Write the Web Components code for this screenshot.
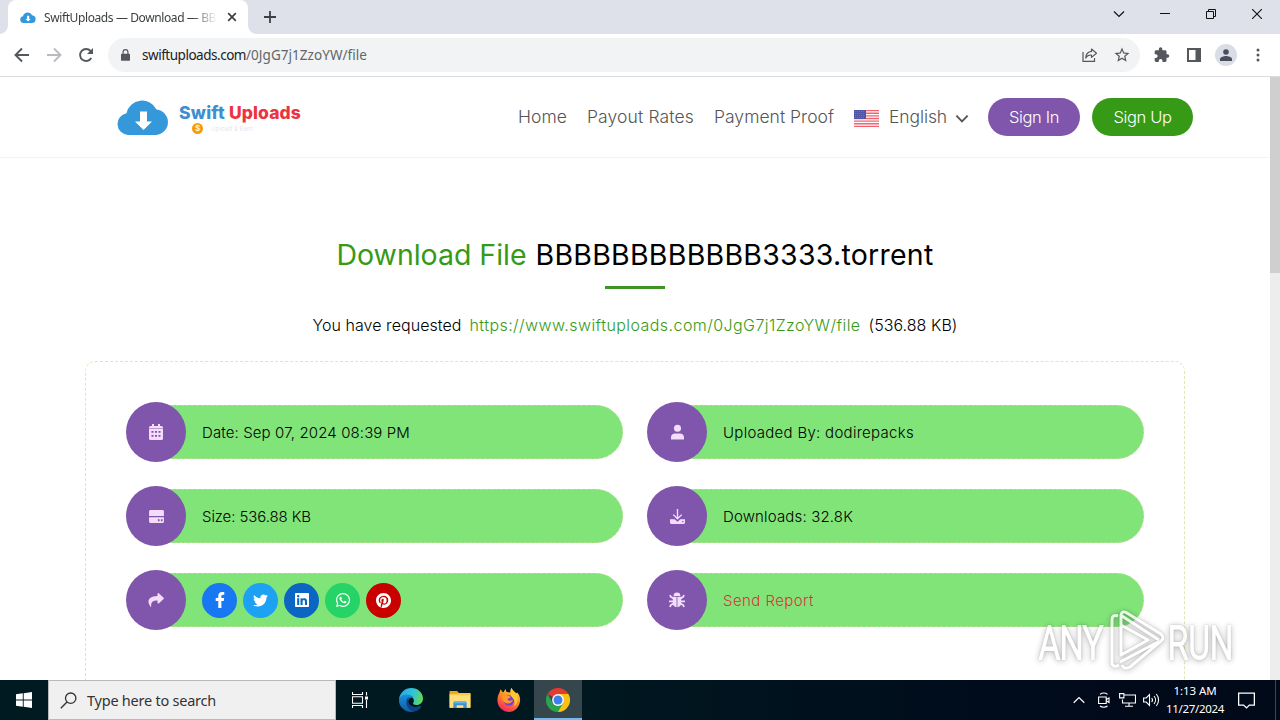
<!DOCTYPE html>
<html lang="en">
<head>
<meta charset="utf-8">
<title>SwiftUploads</title>
<style>
  html, body { margin: 0; height: 100%; overflow: hidden; background: #fff; }
</style>
</head>
<body>
<desktop-screen></desktop-screen>

<script>
// name: [viewBox, markup]
const ICONS = {
  cloud: ["0 0 52 36", '<path fill="#3498db" d="M11 36a11 11 0 0 1-1.500-21.800A16 16 0 0 1 39.500 10.500 12.800 12.800 0 0 1 39 36z"/><path fill="#fff" d="M23 12.500h7v10h5L26.500 31 18 22.500h5z"/>'],
  close: ["0 0 10 10", '<path d="M1.200 1.200l7.600 7.600M8.800 1.200L1.200 8.800" fill="none" stroke="currentColor" stroke-width="1.700"/>'],
  plus: ["0 0 12 12", '<path d="M6 0v12M0 6h12" fill="none" stroke="currentColor" stroke-width="1.800"/>'],
  back: ["0 0 16 16", '<path d="M15 8H2M8 1.500L1.500 8 8 14.500" fill="none" stroke="currentColor" stroke-width="1.900"/>'],
  forward: ["0 0 16 16", '<path d="M1 8h13M8 1.500L14.500 8 8 14.500" fill="none" stroke="currentColor" stroke-width="1.900"/>'],
  reload: ["0 0 16 16", '<path d="M13.300 11A6 6 0 1 1 12.600 4L14 5.500" fill="none" stroke="currentColor" stroke-width="1.900"/><path fill="currentColor" d="M15 1v6H9z"/>'],
  lock: ["0 0 10 13", '<path fill="currentColor" d="M1 5h8a1 1 0 0 1 1 1v6a1 1 0 0 1-1 1H1a1 1 0 0 1-1-1V6a1 1 0 0 1 1-1z"/><path d="M2.300 5.500V3.300a2.700 2.700 0 0 1 5.400 0v2.200" fill="none" stroke="currentColor" stroke-width="1.300"/>'],
  share: ["0 0 16 14", '<path d="M1 4v9.300h11.500V10" fill="none" stroke="currentColor" stroke-width="1.200"/><path d="M9.500 1l5 4.200-5 4.200V7C6.500 6.800 4.700 8 3.700 10c.3-4 2.500-6.300 5.800-6.600z" fill="none" stroke="currentColor" stroke-width="1.200" stroke-linejoin="round"/>'],
  star: ["0 0 24 24", '<path fill="currentColor" d="M22 9.240l-7.190-.62L12 2 9.190 8.630 2 9.240l5.460 4.730L5.820 21 12 17.270 18.180 21l-1.630-7.030L22 9.240zM12 15.400l-3.760 2.270 1-4.280-3.320-2.880 4.380-.38L12 6.100l1.710 4.040 4.380.38-3.320 2.880 1 4.280L12 15.400z"/>'],
  puzzle: ["1 1 23 22", '<path fill="currentColor" d="M20.500 11H19V7c0-1.100-.9-2-2-2h-4V3.500a2.500 2.500 0 0 0-5 0V5H4c-1.100 0-2 .9-2 2v3.800h1.500a2.700 2.700 0 0 1 0 5.400H2V20c0 1.100.9 2 2 2h3.800v-1.500a2.700 2.700 0 0 1 5.400 0V22H17c1.100 0 2-.9 2-2v-4h1.500a2.500 2.500 0 0 0 0-5z"/>'],
  panel: ["0 0 14 14", '<path fill="currentColor" fill-rule="evenodd" d="M0 0h14v14H0zM2 2v10h6.500V2z"/>'],
  person: ["0 0 12 12", '<circle cx="6" cy="3" r="2.800" fill="currentColor"/><path fill="currentColor" d="M0 12V10c0-2 4-3 6-3s6 1 6 3v2z"/>'],
  dots: ["0 0 4 14", '<g fill="currentColor"><circle cx="2" cy="2" r="1.500"/><circle cx="2" cy="7" r="1.500"/><circle cx="2" cy="12" r="1.500"/></g>'],
  chevdown: ["0 0 12 8", '<path d="M1 1.500l5 5 5-5" fill="none" stroke="currentColor" stroke-width="var(--sw, 1.200)"/>'],
  chevup: ["0 0 12 8", '<path d="M.7 6.700L6 1.500l5.300 5.200" fill="none" stroke="currentColor" stroke-width="1.200"/>'],
  minimize: ["0 0 10 10", '<path fill="currentColor" d="M0 4h10v1H0z"/>'],
  restore: ["0 0 10 10", '<path d="M.5 2.500h7v7h-7zM2.500 2.500v-2h7v7h-2" fill="none" stroke="currentColor"/>'],
  winclose: ["0 0 10 10", '<path d="M0 0l10 10M10 0L0 10" fill="none" stroke="currentColor" stroke-width="1.100"/>'],
  flag: ["0 0 25 17", '<path fill="#fff" d="M0 0h25v17H0z"/><path d="M0 .65h25M0 3.260h25M0 5.870h25M0 8.500h25M0 11.100h25M0 13.720h25M0 16.330h25" stroke="#f2636f" stroke-width="1.400"/><path fill="#5156a8" d="M0 0h12v9H0z"/><path d="M1 1.500h10M1 3.500h10M1 5.500h10M1 7.500h10" stroke="#8084c0" stroke-width=".6" stroke-dasharray="1 1"/>'],
  calendar: ["0 0 14 16", '<path fill="currentColor" fill-rule="evenodd" d="M3 0h2v2h4V0h2v2h1.500A1.500 1.500 0 0 1 14 3.500v11a1.500 1.500 0 0 1-1.500 1.500h-11A1.500 1.500 0 0 1 0 14.500v-11A1.500 1.500 0 0 1 1.500 2H3zM0 4.500v.6h14v-.6zM2.500 7v1.800h2V7zM6 7v1.800h2V7zm3.500 0v1.800h2V7zm-7 4v1.800h2V11zM6 11v1.800h2V11zm3.500 0v1.800h2V11z"/>'],
  drive: ["0 0 16 14", '<path fill="currentColor" fill-rule="evenodd" d="M1 0h14l1 1v5.500H0V1zM0 7.800h16V13l-1 1H1l-1-1zm9.500 2.200v2h1.800v-2zm3.200 0v2h1.800v-2z"/>'],
  arrow: ["0 0 16 14", '<path fill="currentColor" d="M9.500.8c0-.7.8-1 1.300-.6l4.800 4.500c.4.300.4.800 0 1.200l-4.800 4.500c-.5.400-1.300.1-1.300-.6V7.500C5 7.500 2.800 8.800 3.200 13.200c.1.700-.5.800-.9.300C-1.500 8 .5 3.200 9.500 3z"/>'],
  user: ["0 0 14 16", '<circle cx="7" cy="4" r="3.800" fill="currentColor"/><path fill="currentColor" d="M0 16v-2.500A4.500 4.500 0 0 1 4.500 9.500h5a4.500 4.500 0 0 1 4.500 4V16z"/>'],
  inbox: ["0 0 16 16", '<path fill="none" stroke="currentColor" stroke-width="1.500" d="M8 0v10M3.500 6L8 10.500 12.500 6"/><path fill="currentColor" fill-rule="evenodd" d="M0 11h5l3 2.500 3-2.500h5v4l-1 1H1l-1-1zm13 1.800V14h1.300v-1.200z"/>'],
  bug: ["0 0 16 16", '<path fill="currentColor" d="M4.600 4a3.400 3.400 0 0 1 6.800 0zM3.800 4.800h3.800v10.400C5.300 15 3.800 13.500 3.800 11zm4.600 0h3.800V11c0 2.500-1.500 4-3.800 4.200z"/><path d="M1 3l.8 1.800L4.500 6.500M15 3l-.8 1.800-2.700 1.700M0 9.300h4M12 9.300h4M4.500 11.500l-2.700 1.600L1 15M11.500 11.500l2.700 1.600.8 1.900" fill="none" stroke="currentColor" stroke-width="1.800"/>'],
  facebook: ["0 0 320 512", '<path fill="#fff" d="M279.140 288l14.220-92.660h-88.910v-60.130c0-25.350 12.420-50.060 52.240-50.060h40.420V6.260S260.430 0 225.360 0c-73.220 0-121.080 44.380-121.080 124.720v70.620H22.890V288h81.390v224h100.170V288z"/>'],
  twitter: ["0 0 512 512", '<path fill="#fff" d="M459.370 151.716c.325 4.548.325 9.097.325 13.645 0 138.720-105.583 298.558-298.558 298.558-59.452 0-114.680-17.219-161.137-47.106 8.447.974 16.568 1.299 25.340 1.299 49.055 0 94.213-16.568 130.274-44.832-46.132-.975-84.792-31.188-98.112-72.772 6.498.974 12.995 1.624 19.818 1.624 9.421 0 18.843-1.300 27.614-3.573-48.081-9.747-84.143-51.980-84.143-102.985v-1.299c13.969 7.797 30.214 12.670 47.431 13.319-28.264-18.843-46.781-51.005-46.781-87.391 0-19.492 5.197-37.360 14.294-52.954 51.655 63.675 129.300 105.258 216.365 109.807-1.624-7.797-2.599-15.918-2.599-24.040 0-57.828 46.782-104.934 104.934-104.934 30.213 0 57.502 12.670 76.670 33.137 23.715-4.548 46.456-13.320 66.599-25.340-7.798 24.366-24.366 44.833-46.132 57.827 21.117-2.273 41.584-8.122 60.426-16.243-14.292 20.791-32.161 39.308-52.628 54.253z"/>'],
  linkedin: ["0 32 448 448", '<path fill="#fff" d="M416 32H31.900C14.300 32 0 46.500 0 64.300v383.400C0 465.500 14.300 480 31.900 480H416c17.600 0 32-14.500 32-32.300V64.300c0-17.800-14.400-32.300-32-32.300zM135.400 416H69V202.200h66.500V416zm-33.200-243c-21.300 0-38.500-17.300-38.500-38.500S80.900 96 102.200 96c21.200 0 38.500 17.300 38.500 38.500 0 21.300-17.200 38.500-38.500 38.500zm282.100 243h-66.400V312c0-24.800-.5-56.700-34.500-56.700-34.600 0-39.900 27-39.900 54.900V416h-66.400V202.200h63.700v29.200h.9c8.900-16.800 30.600-34.500 62.900-34.500 67.200 0 79.700 44.300 79.700 101.900V416z"/>'],
  whatsapp: ["0 32 448 448", '<path fill="#fff" d="M380.900 97.100C339 55.100 283.200 32 223.900 32c-122.400 0-222 99.600-222 222 0 39.100 10.200 77.300 29.600 111L0 480l117.700-30.900c32.400 17.700 68.900 27 106.100 27h.1c122.300 0 224.100-99.600 224.100-222 0-59.300-25.200-115-67.100-157zm-157 341.600c-33.200 0-65.700-8.900-94-25.700l-6.700-4-69.800 18.300L72 359.200l-4.400-7c-18.500-29.400-28.200-63.300-28.200-98.200 0-101.700 82.800-184.500 184.600-184.500 49.300 0 95.600 19.200 130.400 54.100 34.800 34.900 56.200 81.200 56.100 130.500 0 101.800-84.900 184.600-186.600 184.600zm101.200-138.200c-5.500-2.800-32.800-16.200-37.900-18-5.100-1.900-8.800-2.800-12.500 2.800-3.700 5.600-14.300 18-17.600 21.800-3.200 3.700-6.500 4.200-12 1.400-32.600-16.300-54-29.100-75.500-66-5.700-9.800 5.700-9.100 16.300-30.300 1.800-3.700.9-6.900-.5-9.700-1.400-2.800-12.500-30.100-17.100-41.200-4.500-10.800-9.100-9.300-12.500-9.500-3.200-.2-6.900-.2-10.600-.2-3.700 0-9.700 1.400-14.800 6.900-5.100 5.600-19.400 19-19.400 46.300 0 27.300 19.900 53.700 22.600 57.400 2.800 3.700 39.100 59.700 94.800 83.800 35.200 15.200 49 16.500 66.600 13.900 10.700-1.600 32.800-13.400 37.400-26.400 4.600-13 4.600-24.100 3.200-26.400-1.300-2.500-5-3.900-10.500-6.600z"/>'],
  pinterest: ["0 8 496 496", '<path fill="#fff" d="M496 256c0 137-111 248-248 248-25.600 0-50.200-3.900-73.400-11.100 10.100-16.500 25.200-43.500 30.800-65 3-11.600 15.400-59 15.400-59 8.100 15.400 31.700 28.500 56.800 28.500 74.800 0 128.700-68.800 128.700-154.300 0-81.900-66.900-143.200-152.900-143.200-107 0-163.900 71.800-163.900 150.100 0 36.400 19.400 81.700 50.300 96.100 4.700 2.200 7.200 1.200 8.300-3.300.8-3.400 5-20.300 6.900-28.100.6-2.500.3-4.700-1.700-7.100-10.100-12.500-18.300-35.300-18.300-56.600 0-54.700 41.400-107.600 112-107.600 60.900 0 103.600 41.500 103.600 100.900 0 67.100-33.900 113.600-78 113.600-24.300 0-42.600-20.100-36.700-44.800 7-29.500 20.500-61.300 20.500-82.600 0-19-10.200-34.900-31.400-34.900-24.900 0-44.900 25.700-44.900 60.200 0 22 7.400 36.800 7.400 36.800s-24.500 103.800-29 123.200c-5 21.400-3 51.600-.9 71.200C65.400 450.900 0 361.100 0 256 0 119 111 8 248 8s248 111 248 248z"/>'],
  windows: ["0 0 16 16", '<path fill="#fff" d="M0 2.300L6.800 1.300v6.200H0zM7.700 1.200L16 0v7.500H7.700zM0 8.500h6.800v6.200L0 13.700zM7.700 8.500H16V16l-8.300-1.200z"/>'],
  search: ["0 0 17 17", '<circle cx="10.700" cy="6.200" r="5.200" fill="none" stroke="currentColor" stroke-width="1.300"/><path d="M7 10L.8 16.200" stroke="currentColor" stroke-width="1.400"/>'],
  taskview: ["0 0 16 16", '<path d="M.5 0v2.500h10V0M.5 16v-2.500h10V16M.5 4.700h10v6.600H.5zM14.500 0v3.500M14.500 8v8" fill="none" stroke="#fff" stroke-width="1.100"/><path fill="#fff" d="M13 4.500h3v3h-3z"/>'],
  edge: ["0 0 24 24", '<defs><linearGradient id="e1" x1="0" y1=".3" x2="1" y2=".5"><stop offset="0" stop-color="#2ba7e8"/><stop offset=".55" stop-color="#2fc3d8"/><stop offset="1" stop-color="#62d957"/></linearGradient><linearGradient id="e2" x1="0" y1="0" x2="0" y2="1"><stop offset="0" stop-color="#1b8fd8"/><stop offset="1" stop-color="#1158a8"/></linearGradient></defs><path fill="url(#e1)" d="M0 11.500C.6 4.800 6 0 12.300 0 19 0 24 5 24 10.500c0 4-3 6.500-6.500 6.500-3 0-4-1.200-3.200-2.300 1.500-2 .4-6-3.600-6.300C6 8 1.500 8.500 0 11.500z"/><path fill="url(#e2)" d="M0 12.500C.4 8 4.500 6 9 6.600c2.800.3 4.700 1.600 5.500 3.200-2.300-1-4.800.3-5.300 3-.7 4.400 4.500 8.200 10.800 5.600 1.500-.6 2.200.2 1.400 1.200C17 25 9 25.500 4 20.700 1.500 18.500-.2 15.500 0 12.500z"/><path fill="#0d4384" d="M9 9.500c-3.500 4-1.500 12 5.500 14 3.500-.3 5.700-2 7.300-4.300.5-.8-.3-1.300-1.300-.9-5 2-10.500-.3-11.300-4.500-.3-2 .3-3.600 1.500-4.600z"/>'],
  folder: ["0 0 22 20", '<path fill="#e9a820" d="M0 0h8l2 2.300h12V18H0z"/><path fill="#ffdf78" d="M0 4h22v13.500H0z"/><path fill="#f7c84a" d="M0 3h8l1.500-1H22v2.500H0z"/><path fill="#3f8fd0" d="M4 18v-6l1.500-1.500h11L18 12v6h-3.500v-3h-7v3z"/><path fill="#67b4ea" d="M5.500 10.500h11L18 12v1H4v-1z"/>'],
  firefox: ["0 0 24 24", '<defs><linearGradient id="f1" x1=".8" y1="0" x2=".3" y2="1"><stop offset="0" stop-color="#ffe63b"/><stop offset=".45" stop-color="#ff8a28"/><stop offset="1" stop-color="#f5245e"/></linearGradient></defs><path fill="url(#f1)" d="M2.500 4.500l1-3.300 2.300 3.100 1-.4c.5-1.500 1.200-2.200 2-2.900-.1 1.500.3 2.400 1.200 3l3.500.5C13.500 3 13.300 1.500 14.500 0c1 3 3.500 3.700 5 5.500l.3-1.300C22.500 6.500 23.500 10 23 13.500 22 19.500 17.500 24 12 24S1 19.500.5 13.500C.2 10 1 7 2.500 4.500z"/><circle cx="12" cy="12.500" r="5.200" fill="#7a3fd5"/><path fill="#ff9a24" d="M5 8c2-1.500 4-1.300 5.500 0 1.500.2 2.800 0 3 .8-.2 1.300-2.500 1.500-3 2.800.5 1.500 3.500 1.300 5.500.2-.6 3.500-6.500 5.500-9.500 1.500C5.500 12 4.700 10 5 8z"/><path fill="#ffc930" d="M14.500 0c1 3 4.800 4.600 6 9.500.6 3-.4 7-3.500 8.300 1.500-3 1-6-1.500-8C13 7.500 13.300 2.500 14.500 0z"/>'],
  chrome: ["0 0 24 24", '<path fill="#e33b2e" d="M12 12L1.600 6A12 12 0 0 1 22.400 6z"/><path fill="#fbc116" d="M12 12l.4-6h10A12 12 0 0 1 12 24z"/><path fill="#2ba24c" d="M1.600 6A12 12 0 0 0 12 24l5.200-9L12 12 6.800 15z"/><circle cx="12" cy="12" r="5.900" fill="#fff"/><circle cx="12" cy="12" r="4.500" fill="#3c7ff0"/>'],
  camera: ["0 0 12 16", '<path d="M.6 5h7.600v6.500H.6zM8.500 7.500l2.500-1.600v4.600L8.500 9M2 2.300C4 .6 7.500.6 9.500 2.300M2 14c2 1.600 5.500 1.600 7.500 0" fill="none" stroke="#fff" stroke-width="1.100"/>'],
  network: ["0 0 17 14", '<path d="M5.500 2h11v8h-13V6.500M10 10v3M6 13.300h8M.6.6h4.300v4.300H.6z" fill="none" stroke="#fff" stroke-width="1.100"/>'],
  volume: ["0 0 17 14", '<path d="M.6 5v4h2.600l3.300 3.300V1.700L3.200 5zM8.700 5c1 1.200 1 2.800 0 4M11 3c2 2.300 2 5.700 0 8M13.300 1c3 3.500 3 8.500 0 12" fill="none" stroke="#fff" stroke-width="1.100"/>'],
  notice: ["0 0 16 16", '<path d="M.6 1h14.800v11.300h-4.700L8 15l-2.700-2.700H.6z" fill="none" stroke="#fff" stroke-width="1.200"/>']
}

class UiIcon extends HTMLElement {
  constructor() {
    super()
    this.attachShadow({ mode: "open" })
  }

  connectedCallback() {
    const [box, markup] = ICONS[this.getAttribute("name")]
    const w = this.getAttribute("w")
    const h = this.getAttribute("h") || w
    this.shadowRoot.innerHTML = `
      <style>
        :host { display: block; flex: none; width: ${w}px; height: ${h}px; }
        svg { display: block; }
      </style>
      <svg width="${w}" height="${h}" viewBox="${box}">${markup}</svg>
    `
  }
}
customElements.define("ui-icon", UiIcon)

// Text run that is tracked to fill the given width
class FitText extends HTMLElement {
  constructor() {
    super()
    this.attachShadow({ mode: "open" })
    this.shadowRoot.innerHTML = `
      <style>
        :host { display: block; flex: none; white-space: nowrap; }
        span { display: inline-block; }
      </style>
      <span><slot></slot></span>
    `
  }

  connectedCallback() {
    const width = Number(this.getAttribute("width"))
    const span = this.shadowRoot.querySelector("span")
    this.style.width = width + "px"
    const natural = span.getBoundingClientRect().width
    span.style.letterSpacing = (width - natural) / this.textContent.length + "px"
  }
}

class BrowserTabs extends HTMLElement {
  constructor() {
    super()
    this.attachShadow({ mode: "open" })
    this.shadowRoot.innerHTML = `
      <style>
        :host { display: flex; height: 34px; background: #dee1e9; justify-content: space-between; font-size: 12px; color: #3c4043; }
        .strip { display: flex; align-items: center; gap: 16px; }
        .tab { display: flex; align-items: center; position: relative; box-sizing: border-box; width: 240px; height: 34px; margin-left: 8px; padding-left: 12px; background: #fff; border-radius: 8px 8px 0 0; }
        .tab::before, .tab::after { content: ''; position: absolute; bottom: 0; width: 8px; height: 8px; }
        .tab::before { left: -8px; background: radial-gradient(circle at 0 0, transparent 7.500px, #fff 8px); }
        .tab::after { right: -8px; background: radial-gradient(circle at 100% 0, transparent 7.500px, #fff 8px); }
        .name { width: 172px; margin-left: 8px; -webkit-mask: linear-gradient(90deg, #000 148px, transparent 173px); mask: linear-gradient(90deg, #000 148px, transparent 173px); }
        .tab ui-icon[name=close] { margin-left: 11px; }
        .window { display: flex; align-items: center; height: 28px; color: #111; }
        .window ui-icon { margin-right: 36px; }
        .window ui-icon:last-child { margin-right: 18px; }
      </style>
      <div class="strip">
        <div class="tab">
          <ui-icon name="cloud" w="16" h="11"></ui-icon>
          <div class="name"><fit-text width="172">SwiftUploads — Download — BB</fit-text></div>
          <ui-icon name="close" w="10"></ui-icon>
        </div>
        <ui-icon name="plus" w="12"></ui-icon>
      </div>
      <div class="window">
        <ui-icon name="chevdown" w="12" h="8" style="margin-right:40px;margin-left:-6px"></ui-icon>
        <ui-icon name="minimize" w="10" style="margin-left:-5px"></ui-icon>
        <ui-icon name="restore" w="10"></ui-icon>
        <ui-icon name="winclose" w="10"></ui-icon>
      </div>
    `
  }
}
customElements.define("browser-tabs", BrowserTabs)

class BrowserToolbar extends HTMLElement {
  constructor() {
    super()
    this.attachShadow({ mode: "open" })
    this.shadowRoot.innerHTML = `
      <style>
        :host { display: flex; align-items: center; box-sizing: border-box; height: 43px; padding: 0 20px 0 14px; border-bottom: 1px solid #dadce0; color: #54585d; background: #fff; }
        .nav { display: flex; gap: 16px; width: 94px; }
        .nav ui-icon:nth-child(2) { color: #b9bbbe; }
        .address { display: flex; align-items: center; flex: 1; height: 34px; border-radius: 17px; background: #f1f3f4; padding: 0 9px 0 13px; font-size: 13.500px; }
        .host { color: #202124; margin-left: 12px; }
        .path { flex: 1; color: #62666b; }
        .tools { display: flex; align-items: center; }
        .avatar { display: grid; place-items: center; width: 22px; height: 22px; margin: 0 19px 0 14px; border-radius: 50%; background: #dadce6; color: #4a4d5e; }
      </style>
      <div class="nav">
        <ui-icon name="back" w="16"></ui-icon>
        <ui-icon name="forward" w="16"></ui-icon>
        <ui-icon name="reload" w="16"></ui-icon>
      </div>
      <div class="address">
        <ui-icon name="lock" w="9" h="12"></ui-icon>
        <fit-text class="host" width="104">swiftuploads.com</fit-text>
        <div class="path"><fit-text width="121">/0JgG7j1ZzoYW/file</fit-text></div>
        <ui-icon name="share" w="16" h="14" style="margin-right:15px"></ui-icon>
        <ui-icon name="star" w="18"></ui-icon>
      </div>
      <div class="tools">
        <ui-icon name="puzzle" w="16" style="margin:0 17px 0 14px"></ui-icon>
        <ui-icon name="panel" w="14"></ui-icon>
        <div class="avatar"><ui-icon name="person" w="12"></ui-icon></div>
        <ui-icon name="dots" w="4" h="14"></ui-icon>
      </div>
    `
  }
}
customElements.define("browser-toolbar", BrowserToolbar)

class SiteHeader extends HTMLElement {
  constructor() {
    super()
    this.attachShadow({ mode: "open" })
    this.shadowRoot.innerHTML = `
      <style>
        :host { display: flex; align-items: center; justify-content: space-between; box-sizing: border-box; height: 81px; padding: 0 77px 0 117px; border-bottom: 1px solid #f3f3f3; color: #555; font-size: 17.500px; font-weight: 300; }
        .logo { display: flex; align-items: center; gap: 10px; }
        .brand { display: flex; gap: 4px; font: 800 17.500px/20px Inter, sans-serif; color: #3f8fd0; }
        .brand fit-text + fit-text { color: #ee3340; }
        .words { padding-top: 2px; }
        .tagline { display: flex; align-items: center; gap: 8px; padding-left: 13px; height: 11px; font-size: 6px; color: #dedede; }
        .coin { width: 11px; height: 11px; border-radius: 50%; background: #f39c12; color: #fff3c4; text-align: center; font: bold 8px/11px Inter, sans-serif; }
        nav { display: flex; align-items: center; gap: 20px; }
        nav > fit-text, .lang fit-text { line-height: 22px; }
        .lang { display: flex; align-items: center; }
        .lang fit-text { margin: 0 8px 0 10px; }
        .lang ui-icon { margin-top: 2px; }
        .button { display: grid; place-items: center; height: 38px; border-radius: 19px; color: #fff; font-size: 16.500px; }
        .in { width: 92px; background: #7f56ab; margin-left: -1px; }
        .up { width: 101px; margin-left: -8px; background: #369a17; }
      </style>
      <div class="logo">
        <ui-icon name="cloud" w="52" h="36"></ui-icon>
        <div class="words">
          <div class="brand"><fit-text width="46">Swift</fit-text><fit-text width="72">Uploads</fit-text></div>
          <div class="tagline"><div class="coin">$</div><fit-text width="42">Upload &amp; Earn</fit-text></div>
        </div>
      </div>
      <nav>
        <fit-text width="49">Home</fit-text>
        <fit-text width="107">Payout Rates</fit-text>
        <fit-text width="120">Payment Proof</fit-text>
        <div class="lang">
          <ui-icon name="flag" w="25" h="17"></ui-icon>
          <fit-text width="58">English</fit-text>
          <ui-icon name="chevdown" w="14" h="9" style="--sw:1.700"></ui-icon>
        </div>
        <div class="button in"><fit-text width="50">Sign In</fit-text></div>
        <div class="button up"><fit-text width="58">Sign Up</fit-text></div>
      </nav>
    `
  }
}
customElements.define("site-header", SiteHeader)

class InfoRow extends HTMLElement {
  constructor() {
    super()
    this.attachShadow({ mode: "open" })
  }

  connectedCallback() {
    this.shadowRoot.innerHTML = `
      <style>
        :host { display: flex; align-items: center; height: 60px; }
        .disc { display: grid; place-items: center; flex: none; width: 60px; height: 60px; border-radius: 50%; background: #7f56ab; color: #f4dcfb; z-index: 1; }
        .pill { display: flex; align-items: center; flex: 1; box-sizing: border-box; height: 54px; margin-left: -30px; padding-left: 45px; border: 1px dashed #b5dd92; border-radius: 0 27px 27px 0; background: #81e479; }
      </style>
      <div class="disc"><ui-icon name="${this.getAttribute("icon")}" w="${this.getAttribute("w")}" h="${this.getAttribute("h")}"></ui-icon></div>
      <div class="pill"><slot></slot></div>
    `
  }
}
customElements.define("info-row", InfoRow)

class ShareButtons extends HTMLElement {
  constructor() {
    super()
    this.attachShadow({ mode: "open" })
    this.shadowRoot.innerHTML = `
      <style>
        :host { display: flex; gap: 6px; }
        div { display: grid; place-items: center; width: 35px; height: 35px; border-radius: 50%; }
      </style>
      <div style="background:#1877f2"><ui-icon name="facebook" w="10" h="16"></ui-icon></div>
      <div style="background:#1da1f2"><ui-icon name="twitter" w="15"></ui-icon></div>
      <div style="background:#0a66c2"><ui-icon name="linkedin" w="14"></ui-icon></div>
      <div style="background:#25d366"><ui-icon name="whatsapp" w="14"></ui-icon></div>
      <div style="background:#c90000"><ui-icon name="pinterest" w="15"></ui-icon></div>
    `
  }
}
customElements.define("share-buttons", ShareButtons)

class DownloadPage extends HTMLElement {
  constructor() {
    super()
    this.attachShadow({ mode: "open" })
    this.shadowRoot.innerHTML = `
      <style>
        :host { display: block; flex: 1; overflow: hidden; font-family: Inter, sans-serif; color: #000; font-size: 15.500px; }
        h1 { display: flex; justify-content: center; gap: 9px; margin: 78px 0 0; font-size: 28.500px; line-height: 38px; font-weight: 400; }
        .green { color: #369a17; }
        .rule { width: 60px; height: 3px; margin: 12px auto 0; background: #409423; }
        .request { display: flex; justify-content: center; gap: 8px; margin: 26px 0 0; line-height: 20px; font-size: 16px; font-weight: 300; }
        .card { display: grid; grid-template-columns: 1fr 1fr; gap: 24px; align-content: start; box-sizing: border-box; width: 1100px; height: 500px; margin: 26px auto 0; padding: 40px; border: 1px dashed #dfe8b4; border-radius: 10px; font-size: 15px; font-weight: 300; }
        .report { color: #e0303c; }
      </style>
      <site-header></site-header>
      <h1><fit-text class="green" width="190">Download File</fit-text><fit-text width="398">BBBBBBBBBBBB3333.torrent</fit-text></h1>
      <div class="rule"></div>
      <div class="request">
        <fit-text width="149">You have requested</fit-text>
        <fit-text class="green" width="391">https://www.swiftuploads.com/0JgG7j1ZzoYW/file</fit-text>
        <fit-text width="89">(536.88 KB)</fit-text>
      </div>
      <div class="card">
        <info-row icon="calendar" w="14" h="16"><fit-text width="208">Date: Sep 07, 2024 08:39 PM</fit-text></info-row>
        <info-row icon="user" w="13" h="16"><fit-text width="191">Uploaded By: dodirepacks</fit-text></info-row>
        <info-row icon="drive" w="15" h="13"><fit-text width="109">Size: 536.88 KB</fit-text></info-row>
        <info-row icon="inbox" w="15" h="15"><fit-text width="130">Downloads: 32.8K</fit-text></info-row>
        <info-row icon="arrow" w="16" h="14"><share-buttons></share-buttons></info-row>
        <info-row icon="bug" w="16" h="16"><fit-text class="report" width="91">Send Report</fit-text></info-row>
      </div>
    `
  }
}
customElements.define("download-page", DownloadPage)

class TaskBar extends HTMLElement {
  constructor() {
    super()
    this.attachShadow({ mode: "open" })
    this.shadowRoot.innerHTML = `
      <style>
        :host { display: flex; height: 40px; background: linear-gradient(90deg, #001a22, #001820 45%, #000b1b 80%, #000a18); color: #fff; }
        .cell { display: grid; place-items: center; width: 48px; height: 40px; }
        .search { display: flex; align-items: center; gap: 10px; box-sizing: border-box; width: 288px; padding-left: 11px; border: 1px solid #b9b9b9; background: #f0f0f0; color: #333; font-size: 14.500px; }
        .apps { display: flex; flex: 1; }
        .apps .cell { margin-right: 1px; }
        .apps .active { box-sizing: border-box; padding-top: 2px; background: #35464d; border-bottom: 2px solid #76b9ed; }
        .tray { display: flex; align-items: center; gap: 9px; }
        .clock { display: flex; flex-direction: column; align-items: center; font-size: 11.500px; line-height: 18px; margin-left: -3px; }
        .tray ui-icon[name=notice] { margin-left: 5px; }
        .peek { width: 4px; height: 40px; margin-left: 11px; border-left: 1px solid #3d4651; }
      </style>
      <div class="cell"><ui-icon name="windows" w="16"></ui-icon></div>
      <div class="search"><ui-icon name="search" w="17"></ui-icon><fit-text width="129">Type here to search</fit-text></div>
      <div class="apps">
        <div class="cell"><ui-icon name="taskview" w="16"></ui-icon></div>
        <div class="cell" style="margin-left:2px"><ui-icon name="edge" w="24"></ui-icon></div>
        <div class="cell"><ui-icon name="folder" w="22" h="19"></ui-icon></div>
        <div class="cell"><ui-icon name="firefox" w="24"></ui-icon></div>
        <div class="cell active"><ui-icon name="chrome" w="24"></ui-icon></div>
      </div>
      <div class="tray">
        <ui-icon name="chevup" w="12" h="8"></ui-icon>
        <ui-icon name="camera" w="12" h="16" style="margin-left:4px"></ui-icon>
        <ui-icon name="network" w="17" h="14"></ui-icon>
        <ui-icon name="volume" w="17" h="14" style="margin-left:-2px"></ui-icon>
        <div class="clock"><fit-text width="43">1:13 AM</fit-text><fit-text width="58">11/27/2024</fit-text></div>
        <ui-icon name="notice" w="17" h="17"></ui-icon>
        <div class="peek"></div>
      </div>
    `
  }
}
customElements.define("task-bar", TaskBar)

class RunWatermark extends HTMLElement {
  constructor() {
    super()
    this.attachShadow({ mode: "open" })
    this.shadowRoot.innerHTML = `
      <style>
        :host { position: absolute; left: 1035px; top: 606px; opacity: .8; }
        svg { display: block; overflow: visible; filter: drop-shadow(0 0 1px rgba(0, 0, 0, .22)) drop-shadow(0 1px 3px rgba(0, 0, 0, .35)); }
        text { font: 300 47px Roboto, sans-serif; fill: #fff; stroke: #fff; stroke-width: 2.200; }
      </style>
      <svg width="225" height="74">
        <text x="4" y="53" textLength="64" lengthAdjust="spacingAndGlyphs">ANY</text>
        <text x="133" y="53" textLength="65" lengthAdjust="spacingAndGlyphs">RUN</text>
        <g fill="none" stroke="#fff" stroke-width="3" stroke-linejoin="round">
          <path d="M77 52V14q0-6 6-4M77 52v6q2 4 7 1M86 19v30l27-15z"/>
          <path d="M86 18V9q1-5 6-2l34 21q4 4 0 7L95 61q-6 3-8-2M87 10l37 24M85 56l38-20"/>
        </g>
      </svg>
    `
  }
}
customElements.define("run-watermark", RunWatermark)

class DesktopScreen extends HTMLElement {
  constructor() {
    super()
    this.attachShadow({ mode: "open" })
    this.shadowRoot.innerHTML = `
      <style>
        :host { display: flex; flex-direction: column; position: relative; width: 1280px; height: 720px; overflow: hidden; font-family: "Noto Sans", sans-serif; }
        .view { display: flex; flex: 1; min-height: 0; }
        .scroll { width: 10px; background: #ededed; }
        .thumb { height: 196px; background: #cfcfcf; }
      </style>
      <browser-tabs></browser-tabs>
      <browser-toolbar></browser-toolbar>
      <div class="view">
        <download-page></download-page>
        <div class="scroll"><div class="thumb"></div></div>
      </div>
      <task-bar></task-bar>
      <run-watermark></run-watermark>
    `
  }
}
customElements.define("desktop-screen", DesktopScreen)

// Defined last: it measures itself once every parent has its styles
customElements.define("fit-text", FitText)
</script>
</body>
</html>
